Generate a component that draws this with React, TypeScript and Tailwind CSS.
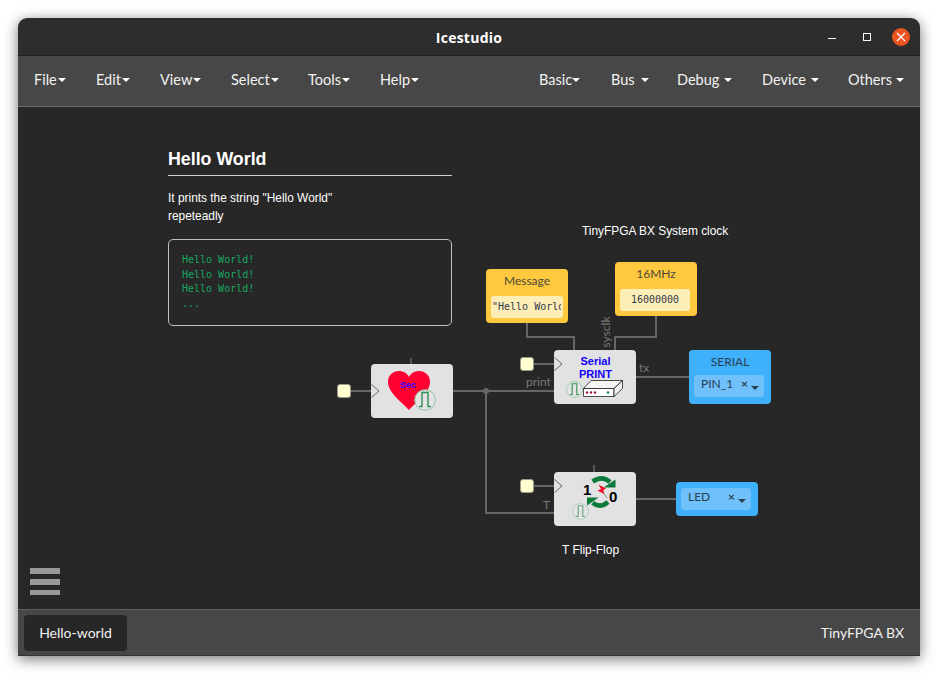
const ui = { fontFamily: "Lato, 'Noto Sans', sans-serif" };
const arial = { fontFamily: "'Liberation Sans', sans-serif" };
const mono = { fontFamily: "'DejaVu Sans Mono', monospace" };

function Caret() {
  return <span className="inline-block w-0 h-0 border-x-[4px] border-x-transparent border-t-[4px] border-t-white" />;
}

const leftMenu = [
  { label: "File", cls: "w-[62px]" },
  { label: "Edit", cls: "w-[64px]" },
  { label: "View", cls: "w-[71px]" },
  { label: "Select", cls: "w-[77px]" },
  { label: "Tools", cls: "w-[72px]" },
  { label: "Help", cls: "w-[60px]" },
];

const rightMenu = [
  { label: "Basic", cls: "w-[72px]", gap: "gap-0" },
  { label: "Bus", cls: "w-[66px]", gap: "gap-[6px]" },
  { label: "Debug", cls: "w-[85px]", gap: "gap-[5px]" },
  { label: "Device", cls: "w-[86px]", gap: "gap-[5px]" },
  { label: "Others", cls: "w-[56px]", gap: "gap-[4px]" },
];

// clock badge used inside the blocks
function ClockIcon({ className }: { className: string }) {
  return (
    <svg viewBox="0 0 22 22" className={className}>
      <circle cx="11" cy="11" r="10.3" fill="#e4e4e4" stroke="#8fc6a2" strokeWidth="1" />
      <path d="M5 17.5h3V3.5h6v14h3" fill="none" stroke="#2f8f55" strokeWidth="1.4" />
    </svg>
  );
}

function InPort({ className }: { className: string }) {
  return <div className={`absolute w-[14px] h-[14px] rounded-[3px] bg-[#ffffd0] border border-[#9a9a88] ${className}`} />;
}

function ClockTick({ className }: { className: string }) {
  return (
    <svg viewBox="0 0 9 14" className={`absolute w-[9px] h-[14px] ${className}`}>
      <path d="M0.5 0.5L8 7L0.5 13.5" fill="none" stroke="#666" strokeWidth="1" />
    </svg>
  );
}

function PinSelect({ name }: { name: string }) {
  return (
    <div className="w-[70px] h-[22px] rounded-[3px] bg-[#70c1fb] text-[#2b3f50] text-[12px] flex items-start pl-[7px] pr-[5px]">
      <span className="flex-1 leading-[17px]">{name}</span>
      <span className="leading-[17px] font-bold">×</span>
      <span className="ml-[3px] mt-[11px] w-0 h-0 border-x-[4px] border-x-transparent border-t-[4px] border-t-[#2b3f50]" />
    </div>
  );
}

export default function App() {
  return (
    <div className="w-[938px] h-[677px] bg-white pt-[18px] pl-[18px] overflow-hidden" style={ui}>
      <div className="w-[902px] h-[638px] flex flex-col rounded-t-[9px] overflow-hidden shadow-[0_3px_14px_rgba(0,0,0,0.55)]">
        {/* title bar */}
        <div className="relative h-[38px] shrink-0 bg-[#2d2d2d] border-b border-[#1f1f1f] flex items-center justify-center">
          <span className="text-[14px] font-bold text-white tracking-[0.25px] pt-px" style={{ fontFamily: "'Open Sans', sans-serif" }}>Icestudio</span>
          <div className="absolute right-[10px] top-0 h-[37px] flex items-center gap-[27px]">
            <span className="block w-[8px] h-px bg-white mt-[3px]" />
            <span className="block w-[8px] h-[8px] border border-white" />
            <span className="w-[18px] h-[18px] rounded-full bg-[#e95420] flex items-center justify-center -ml-[6px]">
              <svg viewBox="0 0 10 10" className="w-[10px] h-[10px]">
                <path d="M1 1L9 9M9 1L1 9" stroke="#fff" strokeWidth="1.2" />
              </svg>
            </span>
          </div>
        </div>

        {/* menu bar */}
        <div className="h-[51px] shrink-0 bg-[#474747] border-b border-[#6a6a6a] flex items-center justify-between px-[16px] pb-[2px] text-[14.5px] text-[#f2f2f2]">
          <div className="flex">
            {leftMenu.map((m) => (
              <div key={m.label} className={`${m.cls} flex items-center gap-px`}>
                <span>{m.label}</span>
                <Caret />
              </div>
            ))}
          </div>
          <div className="flex">
            {rightMenu.map((m) => (
              <div key={m.label} className={`${m.cls} flex items-center ${m.gap}`}>
                <span>{m.label}</span>
                <Caret />
              </div>
            ))}
          </div>
        </div>

        {/* canvas */}
        <div className="relative flex-1 bg-[#272727] overflow-hidden">
          <svg className="absolute left-0 top-0 w-[902px] h-[502px]" viewBox="0 0 902 502" fill="none" stroke="#666" strokeWidth="2">
            <path d="M333 284H353" />
            <path d="M435 284H536" />
            <path d="M468 284V406H536" />
            <path d="M393 251V257" strokeWidth="1.5" />
            <path d="M509 216V230H556V243" />
            <path d="M638 209V230H597V243" />
            <path d="M515 257H536" />
            <path d="M618 270H671" />
            <path d="M515 379H536" />
            <path d="M576 358V365" strokeWidth="1.5" />
            <path d="M618 392H658" />
            <circle cx="468" cy="284" r="3" fill="#666" stroke="none" />
          </svg>

          {/* info note */}
          <div className="absolute left-[150px] top-[40px] w-[284px] text-white" style={arial}>
            <h1 className="text-[17.8px] font-bold leading-[24px] pb-[4px] border-b border-[#d0d0d0]">Hello World</h1>
            <p className="mt-[14px] text-[11.9px] leading-[17.5px]">It prints the string "Hello World"<br />repeteadly</p>
            <div className="mt-[14px] h-[87px] rounded-[5px] border border-[#c0c0c0] pl-[13px] pt-[13px] text-[10px] leading-[14.6px] text-[#17a862]" style={mono}>
              <div>Hello World!</div>
              <div>Hello World!</div>
              <div>Hello World!</div>
              <div>...</div>
            </div>
          </div>

          <div className="absolute left-[564px] top-[116px] text-[11.9px] leading-[16px] text-white" style={arial}>TinyFPGA BX System clock</div>
          <div className="absolute left-[544px] top-[435px] text-[12px] leading-[16px] text-white" style={arial}>T Flip-Flop</div>

          {/* heart block */}
          <InPort className="left-[319px] top-[277px]" />
          <div className="absolute left-[353px] top-[257px] w-[82px] h-[54px] rounded-[4px] bg-[#e2e2e2]">
            <ClockTick className="left-0 top-[20px]" />
            <svg viewBox="0 0 42 39" className="absolute left-[17px] top-[7px] w-[42px] h-[39px]">
              <path d="M21 39C15 32 0 22 0 11C0 4 5 0 11 0C15 0 19 2 21 6C23 2 27 0 31 0C37 0 42 4 42 11C42 22 27 32 21 39Z" fill="#ff0033" />
            </svg>
            <span className="absolute left-[29px] top-[16px] text-[9px] leading-[11px] font-bold text-[#2a00ff]" style={arial}>Sec</span>
            <ClockIcon className="absolute left-[43px] top-[25px] w-[22px] h-[22px]" />
          </div>

          {/* serial print block */}
          <InPort className="left-[502px] top-[250px]" />
          <div className="absolute left-[536px] top-[243px] w-[82px] h-[54px] rounded-[4px] bg-[#e2e2e2] flex flex-col items-center pt-[5px]">
            <ClockTick className="left-0 top-[7px]" />
            <div className="text-center text-[11px] leading-[13px] text-[#1400ff] font-bold pl-[1px]" style={arial}>
              <div>Serial</div>
              <div>PRINT</div>
            </div>
            <div className="flex items-start -mt-[1px] self-start ml-[12px]">
              <ClockIcon className="w-[17px] h-[17px] mt-px" />
              <svg viewBox="0 0 40 17" className="w-[40px] h-[17px]">
                <path d="M0.5 8.5L8 0.5H39.5L31 8.5Z" fill="#f4f4f4" stroke="#222" strokeWidth="0.8" />
                <path d="M0.5 8.5H31V16.5H0.5Z" fill="#fff" stroke="#222" strokeWidth="0.8" />
                <path d="M31 8.5L39.5 0.5V8.5L31 16.5Z" fill="#eee" stroke="#222" strokeWidth="0.8" />
                <circle cx="4" cy="12.5" r="1.2" fill="#a01030" />
                <circle cx="8" cy="12.5" r="1.2" fill="#a01030" />
                <circle cx="12" cy="12.5" r="1.2" fill="#a01030" />
                <circle cx="25" cy="12.5" r="1.2" fill="#0a7a3a" />
              </svg>
            </div>
          </div>
          <span className="absolute left-[508px] top-[267px] text-[12px] leading-[16px] text-[#777]">print</span>
          <span className="absolute left-[621px] top-[253px] text-[12px] leading-[16px] text-[#777]">tx</span>
          <span className="absolute left-[572px] top-[217px] w-[32px] text-center text-[12px] leading-[16px] text-[#777] -rotate-90">sysclk</span>

          {/* constants */}
          <div className="absolute left-[468px] top-[162px] w-[82px] h-[54px] rounded-[4px] bg-[#fec83f] text-[#4a4a3a] flex flex-col items-center pt-[4px] gap-[7px]">
            <div className="text-[12px] leading-[16px]">Message</div>
            <div className="w-[72px] h-[22px] rounded-[3px] bg-[#fdeeb8] px-[2px]">
              <div className="overflow-hidden text-[10px] leading-[22px] whitespace-nowrap text-[#33394a] -ml-[1px]" style={mono}>"Hello World!"</div>
            </div>
          </div>
          <div className="absolute left-[597px] top-[155px] w-[82px] h-[54px] rounded-[4px] bg-[#fec83f] text-[#4a4a3a] flex flex-col items-center pt-[4px] gap-[7px]">
            <div className="text-[12px] leading-[16px]">16MHz</div>
            <div className="w-[70px] h-[22px] rounded-[3px] bg-[#fdeeb8] text-center text-[10px] leading-[22px] text-[#33394a] self-start ml-[5px]" style={mono}>16000000</div>
          </div>

          {/* output pins */}
          <div className="absolute left-[671px] top-[243px] w-[82px] h-[54px] rounded-[4px] bg-[#3fb0fc] text-[#2b3f50] flex flex-col pl-[5px] pt-[4px] gap-[5px]">
            <div className="text-[12px] leading-[16px] text-center pr-[5px]">SERIAL</div>
            <PinSelect name="PIN_1" />
          </div>
          <div className="absolute left-[658px] top-[375px] w-[82px] h-[34px] rounded-[4px] bg-[#3fb0fc] flex items-center pl-[5px]">
            <PinSelect name="LED" />
          </div>

          {/* flip flop block */}
          <InPort className="left-[502px] top-[372px]" />
          <div className="absolute left-[536px] top-[365px] w-[82px] h-[54px] rounded-[4px] bg-[#e2e2e2]">
            <ClockTick className="left-0 top-[7px]" />
            <svg viewBox="0 0 32 36" className="absolute left-[32px] top-[2px] w-[32px] h-[36px]">
              <path d="M6.7 7.5Q16 1 24 8" fill="none" stroke="#0a7a3a" strokeWidth="4.6" />
              <path d="M17.5 13.5H29.5V5.5Z" fill="#0a7a3a" />
              <path d="M22 28Q14 35 6.7 28.7" fill="none" stroke="#0a7a3a" strokeWidth="4.6" />
              <path d="M12.5 23.5H1V31.5Z" fill="#0a7a3a" />
              <path d="M16.5 17L21 24" stroke="#888" strokeWidth="1" />
              <path d="M12.5 10.5L20 14.5L17.5 16L18 20L11.5 16.5L15 15Z" fill="#f0102c" />
            </svg>
            <span className="absolute left-[29px] top-[9px] text-[15px] leading-[17px] font-bold text-black" style={arial}>1</span>
            <span className="absolute left-[55px] top-[16px] text-[15px] leading-[17px] font-bold text-black" style={arial}>0</span>
            <ClockIcon className="absolute left-[18px] top-[31px] w-[17px] h-[17px] opacity-70" />
          </div>
          <span className="absolute left-[525px] top-[390px] text-[12px] leading-[16px] text-[#777]">T</span>

          {/* hamburger */}
          <div className="absolute left-[12px] top-[461px] w-[30px] flex flex-col gap-[5px]">
            <span className="block h-[6px] bg-[#999]" />
            <span className="block h-[6px] bg-[#999]" />
            <span className="block h-[5px] bg-[#999]" />
          </div>
        </div>

        {/* footer */}
        <div className="h-[47px] shrink-0 bg-[#474747] border-t border-[#5f5f5f] border-b border-b-[#333] flex items-center justify-between pl-[6px] pr-[16px] text-[14px] text-[#f2f2f2]">
          <div className="w-[103px] h-[36px] rounded-[4px] bg-[#272727] flex items-center justify-center pb-px">Hello-world</div>
          <span className="pb-px">TinyFPGA BX</span>
        </div>
      </div>
    </div>
  );
}
